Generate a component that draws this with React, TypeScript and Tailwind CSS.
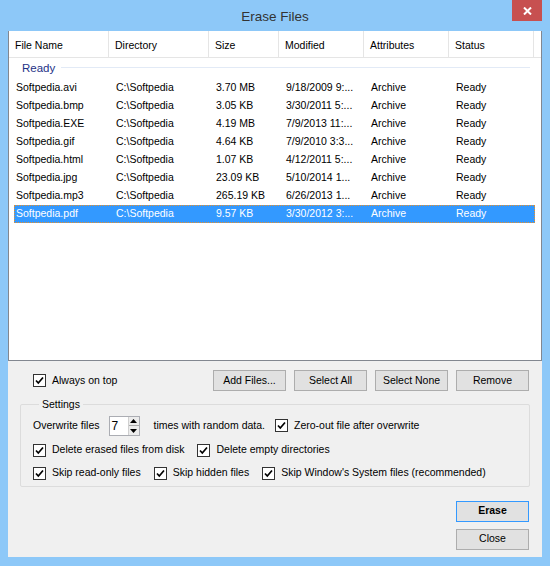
import React from 'react';

interface FileRow {
    name: string;
    dir: string;
    size: string;
    modified: string;
    attr: string;
    status: string;
}

const files: FileRow[] = [
    { name: 'Softpedia.avi', dir: 'C:\\Softpedia', size: '3.70 MB', modified: '9/18/2009 9:...', attr: 'Archive', status: 'Ready' },
    { name: 'Softpedia.bmp', dir: 'C:\\Softpedia', size: '3.05 KB', modified: '3/30/2011 5:...', attr: 'Archive', status: 'Ready' },
    { name: 'Softpedia.EXE', dir: 'C:\\Softpedia', size: '4.19 MB', modified: '7/9/2013 11:...', attr: 'Archive', status: 'Ready' },
    { name: 'Softpedia.gif', dir: 'C:\\Softpedia', size: '4.64 KB', modified: '7/9/2010 3:3...', attr: 'Archive', status: 'Ready' },
    { name: 'Softpedia.html', dir: 'C:\\Softpedia', size: '1.07 KB', modified: '4/12/2011 5:...', attr: 'Archive', status: 'Ready' },
    { name: 'Softpedia.jpg', dir: 'C:\\Softpedia', size: '23.09 KB', modified: '5/10/2014 1...', attr: 'Archive', status: 'Ready' },
    { name: 'Softpedia.mp3', dir: 'C:\\Softpedia', size: '265.19 KB', modified: '6/26/2013 1...', attr: 'Archive', status: 'Ready' },
    { name: 'Softpedia.pdf', dir: 'C:\\Softpedia', size: '9.57 KB', modified: '3/30/2012 3:...', attr: 'Archive', status: 'Ready' },
];

function CheckBox({ label, className = '' }: { label: string; className?: string }) {
    return (
        <div className={`flex items-center gap-[6px] ${className}`}>
            <div className="w-[13px] h-[13px] border border-[#333] bg-white flex items-center justify-center shrink-0">
                <svg width="11" height="11" viewBox="0 0 11 11">
                    <path d="M2 5.5 L4.3 8 L9 2.5" fill="none" stroke="#000" strokeWidth="1.7" />
                </svg>
            </div>
            <span className="whitespace-nowrap">{label}</span>
        </div>
    );
}

function WinButton({ children, primary = false }: { children: React.ReactNode; primary?: boolean }) {
    return (
        <div
            className={`w-[73px] h-[21px] flex items-center justify-center bg-[#e1e1e1] border ${
                primary ? 'border-[#3399ff] font-bold' : 'border-[#adadad]'
            }`}
        >
            {children}
        </div>
    );
}

export default function App() {
    return (
        <div className="w-[550px] h-[566px] bg-[#8dc8f8] flex flex-col font-['Liberation_Sans',Arial,sans-serif] text-[10.5px] text-black">
            {/* Title bar */}
            <div className="h-[31px] relative flex items-center justify-center pt-[3px]">
                <span className="text-[13.5px] text-[#333]">Erase Files</span>
                <div className="absolute right-[8px] top-0 w-[30px] h-[21px] bg-[#c75050] flex items-center justify-center">
                    <svg width="9" height="8" viewBox="0 0 9 8">
                        <path d="M1 0.5 L8 7.5 M8 0.5 L1 7.5" stroke="#fff" strokeWidth="2" />
                    </svg>
                </div>
            </div>

            {/* Client area */}
            <div className="mx-[8px] mb-[9px] flex-1 bg-[#f0f0f0] flex flex-col">
                {/* List view */}
                <div className="h-[330px] bg-white border-x border-b border-[#828790] flex flex-col">
                    <div className="h-[27px] flex border-b border-[#e5e5e5]">
                        {[
                            ['File Name', 'w-[100px]'],
                            ['Directory', 'w-[100px]'],
                            ['Size', 'w-[70px]'],
                            ['Modified', 'w-[85px]'],
                            ['Attributes', 'w-[85px]'],
                            ['Status', 'w-[85px]'],
                        ].map(([label, w]) => (
                            <div key={label} className={`${w} flex items-center pl-[6px] pt-[3px] border-r border-[#e5e5e5]`}>
                                {label}
                            </div>
                        ))}
                    </div>

                    {/* Group header */}
                    <div className="h-[21px] flex items-center pl-[13px] pr-[11px]">
                        <span className="text-[#1e3287] text-[11.5px]">Ready</span>
                        <div className="flex-1 h-px bg-[#e2eaf6] ml-[6px] -mt-[3px]"></div>
                    </div>

                    {files.map((f, i) => {
                        const selected = i === files.length - 1;
                        return (
                            <div
                                key={f.name}
                                className={`h-[18px] ml-[5px] w-[521px] flex items-center ${
                                    selected ? 'bg-[#3399ff] text-white outline-1 outline-dotted outline-[#e8902a] -outline-offset-1' : ''
                                }`}
                            >
                                <div className="w-[100px] pl-[2px] whitespace-nowrap">{f.name}</div>
                                <div className="w-[100px] pl-[2px] whitespace-nowrap">{f.dir}</div>
                                <div className="w-[70px] pl-[2px] whitespace-nowrap">{f.size}</div>
                                <div className="w-[85px] pl-[2px] whitespace-nowrap">{f.modified}</div>
                                <div className="w-[85px] pl-[2px] whitespace-nowrap">{f.attr}</div>
                                <div className="w-[79px] pl-[2px] whitespace-nowrap">{f.status}</div>
                            </div>
                        );
                    })}
                </div>

                {/* Toolbar row */}
                <div className="mt-[9px] h-[21px] flex items-center pl-[25px] pr-[13px]">
                    <CheckBox label="Always on top" />
                    <div className="ml-auto flex gap-[8px]">
                        <WinButton>Add Files...</WinButton>
                        <WinButton>Select All</WinButton>
                        <WinButton>Select None</WinButton>
                        <WinButton>Remove</WinButton>
                    </div>
                </div>

                {/* Settings group */}
                <fieldset className="mt-[6px] mx-[12px] border border-[#dcdcdc] rounded-[2px] pl-[12px] pb-[4px]">
                    <legend className="ml-[6px] px-[3px]">Settings</legend>
                    <div className="h-[20px] flex items-center mt-[3px]">
                        <span>Overwrite files</span>
                        <div className="ml-[9px] w-[31px] h-[20px] border border-[#abadb3] bg-white flex">
                            <span className="flex-1 pl-[2px] flex items-center text-[12px]">7</span>
                            <div className="w-[11px] flex flex-col border-l border-[#d0d0d0] bg-[#ececec]">
                                <div className="flex-1 flex items-center justify-center border-b border-[#acacac]">
                                    <svg width="7" height="4" viewBox="0 0 7 4"><path d="M0 4 L3.5 0 L7 4 Z" fill="#000" /></svg>
                                </div>
                                <div className="flex-1 flex items-center justify-center">
                                    <svg width="7" height="4" viewBox="0 0 7 4"><path d="M0 0 L3.5 4 L7 0 Z" fill="#000" /></svg>
                                </div>
                            </div>
                        </div>
                        <span className="ml-[14px]">times with random data.</span>
                        <CheckBox label="Zero-out file after overwrite" className="ml-[10px]" />
                    </div>
                    <div className="h-[17px] mt-[6px] flex items-center">
                        <CheckBox label="Delete erased files from disk" />
                        <CheckBox label="Delete empty directories" className="ml-[13px]" />
                    </div>
                    <div className="h-[17px] mt-[6px] flex items-center">
                        <CheckBox label="Skip read-only files" />
                        <CheckBox label="Skip hidden files" className="ml-[13px]" />
                        <CheckBox label="Skip Window's System files (recommended)" className="ml-[13px]" />
                    </div>
                </fieldset>

                {/* Action buttons */}
                <div className="mt-[14px] flex flex-col items-end gap-[7px] pr-[13px]">
                    <WinButton primary>Erase</WinButton>
                    <WinButton>Close</WinButton>
                </div>
            </div>
        </div>
    );
}
